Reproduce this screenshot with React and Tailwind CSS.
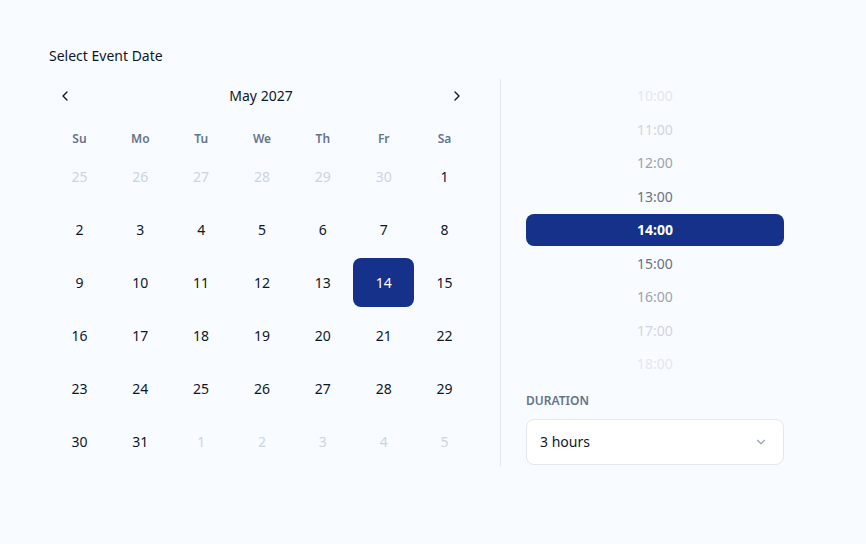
import { ChevronLeft, ChevronRight, ChevronDown } from 'lucide-react'

const weekdays = ['Su', 'Mo', 'Tu', 'We', 'Th', 'Fr', 'Sa']

const days = [
  ...[25, 26, 27, 28, 29, 30].map(d => ({ d, out: true })),
  ...Array.from({ length: 31 }, (_, i) => ({ d: i + 1, out: false })),
  ...[1, 2, 3, 4, 5].map(d => ({ d, out: true })),
]

const times = [
  { t: '10:00', c: 'text-[#e5e7eb]' },
  { t: '11:00', c: 'text-[#d1d5db]' },
  { t: '12:00', c: 'text-[#9ca3af]' },
  { t: '13:00', c: 'text-[#6b7280]' },
  { t: '14:00', c: 'selected' },
  { t: '15:00', c: 'text-[#6b7280]' },
  { t: '16:00', c: 'text-[#9ca3af]' },
  { t: '17:00', c: 'text-[#d1d5db]' },
  { t: '18:00', c: 'text-[#e5e7eb]' },
]

export default function App() {
  return (
    <div className="min-h-screen w-full bg-[#f8fbff] font-['Noto_Sans',sans-serif] text-[#0f172a] pt-[46px] px-[49px]">
      <h2 className="text-sm leading-5 font-normal text-[#0f172a]">Select Event Date</h2>

      <div className="flex mt-[13px]">
        {/* Calendar */}
        <div className="w-[426px]">
          <div className="h-[34px] flex items-center justify-between pl-[8px] pr-[10px]">
            <button className="w-4 h-4 flex items-center justify-center text-[#0f172a]">
              <ChevronLeft size={16} strokeWidth={2} />
            </button>
            <span className="text-sm font-normal">May 2027</span>
            <button className="w-4 h-4 flex items-center justify-center text-[#0f172a]">
              <ChevronRight size={16} strokeWidth={2} />
            </button>
          </div>

          <div className="grid grid-cols-7 mt-[15px] h-[22px] items-center">
            {weekdays.map(w => (
              <div key={w} className="text-center text-xs font-semibold text-[#64748b]">{w}</div>
            ))}
          </div>

          <div className="grid grid-cols-7 gap-y-[4px] mt-[2px]">
            {days.map((x, i) => {
              const sel = !x.out && x.d === 14
              return (
                <div
                  key={i}
                  className={`h-[49px] flex items-center justify-center text-sm rounded-[8px] ${
                    sel ? 'bg-[#15318a] text-white' : x.out ? 'text-[#cbd5e1]' : 'text-[#0f172a]'
                  }`}
                >
                  {x.d}
                </div>
              )
            })}
          </div>
        </div>

        {/* Divider */}
        <div className="ml-[25px] w-px bg-[#e2e8f0]" />

        {/* Time + duration */}
        <div className="ml-[25px] w-[258px] flex flex-col">
          <div className="flex flex-col gap-[1.5px] pt-px">
            {times.map(x => (
              <div
                key={x.t}
                className={`h-8 flex items-center justify-center text-sm rounded-[8px] ${
                  x.c === 'selected' ? 'bg-[#15318a] text-white font-bold' : x.c
                }`}
              >
                {x.t}
              </div>
            ))}
          </div>

          <div className="mt-[13px] text-xs leading-4 font-semibold uppercase text-[#64748b]">Duration</div>
          <div className="mt-[10px] h-[46px] bg-white border border-[#e2e8f0] rounded-[8px] flex items-center justify-between pl-[13px] pr-[15px]">
            <span className="text-sm text-[#0f172a]">3 hours</span>
            <ChevronDown size={14} className="text-[#94a3b8]" />
          </div>
        </div>
      </div>
    </div>
  )
}
